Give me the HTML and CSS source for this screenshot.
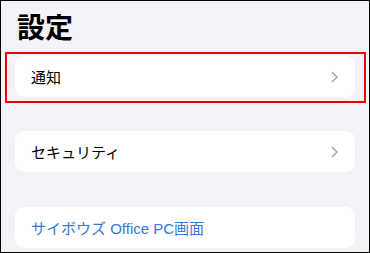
FILE: index.html
```html
<!DOCTYPE html>
<html lang="ja">
<head>
    <meta charset="UTF-8">
    <meta name="viewport" content="width=device-width, initial-scale=1.0">
    <title>設定</title>
    <link rel="stylesheet" href="styles.css">
</head>
<body>
    <div class="pantalla">
        <h1>設定</h1>

        <div class="destaque">
            <div class="item">
                <span>通知</span>
                <svg class="seta" width="7" height="12" viewBox="0 0 7 12"><polyline points="1,1 6,6 1,11" /></svg>
            </div>
        </div>

        <div class="item item-seguranca">
            <span>セキュリティ</span>
            <svg class="seta" width="7" height="12" viewBox="0 0 7 12"><polyline points="1,1 6,6 1,11" /></svg>
        </div>

        <div class="item item-link">
            <span>サイボウズ Office PC画面</span>
        </div>
    </div>
</body>
</html>
```

FILE: styles.css
```css
body {
    margin: 0;
    font-family: "Liberation Sans", "Noto Sans CJK JP", sans-serif;
}
.pantalla {
    width: 370px;
    height: 253px;
    box-sizing: border-box;
    border: 1px solid #000;
    background-color: #f2f2f7;
    overflow: hidden;
}
h1 {
    margin: 14px 0 0 16px;
    font-size: 28px;
    line-height: 28px;
    font-weight: bold;
    color: #000;
}
.destaque {
    margin: 9px 0 0 4px;
    width: 361px;
    box-sizing: border-box;
    border: 2px solid #f00000;
    padding: 2px 9px 4px 8px;
}
.item {
    display: flex;
    align-items: center;
    justify-content: space-between;
    width: 340px;
    height: 41px;
    box-sizing: border-box;
    padding: 0 17px 0 16px;
    background-color: #fff;
    border-radius: 9px;
    font-size: 15px;
    color: #000;
}
.item-seguranca {
    margin: 28px 0 0 14px;
}
.item-link {
    margin: 35px 0 0 14px;
    color: #2f7bd8;
}
.seta polyline {
    fill: none;
    stroke: #a4a4a9;
    stroke-width: 1.5;
}
```
